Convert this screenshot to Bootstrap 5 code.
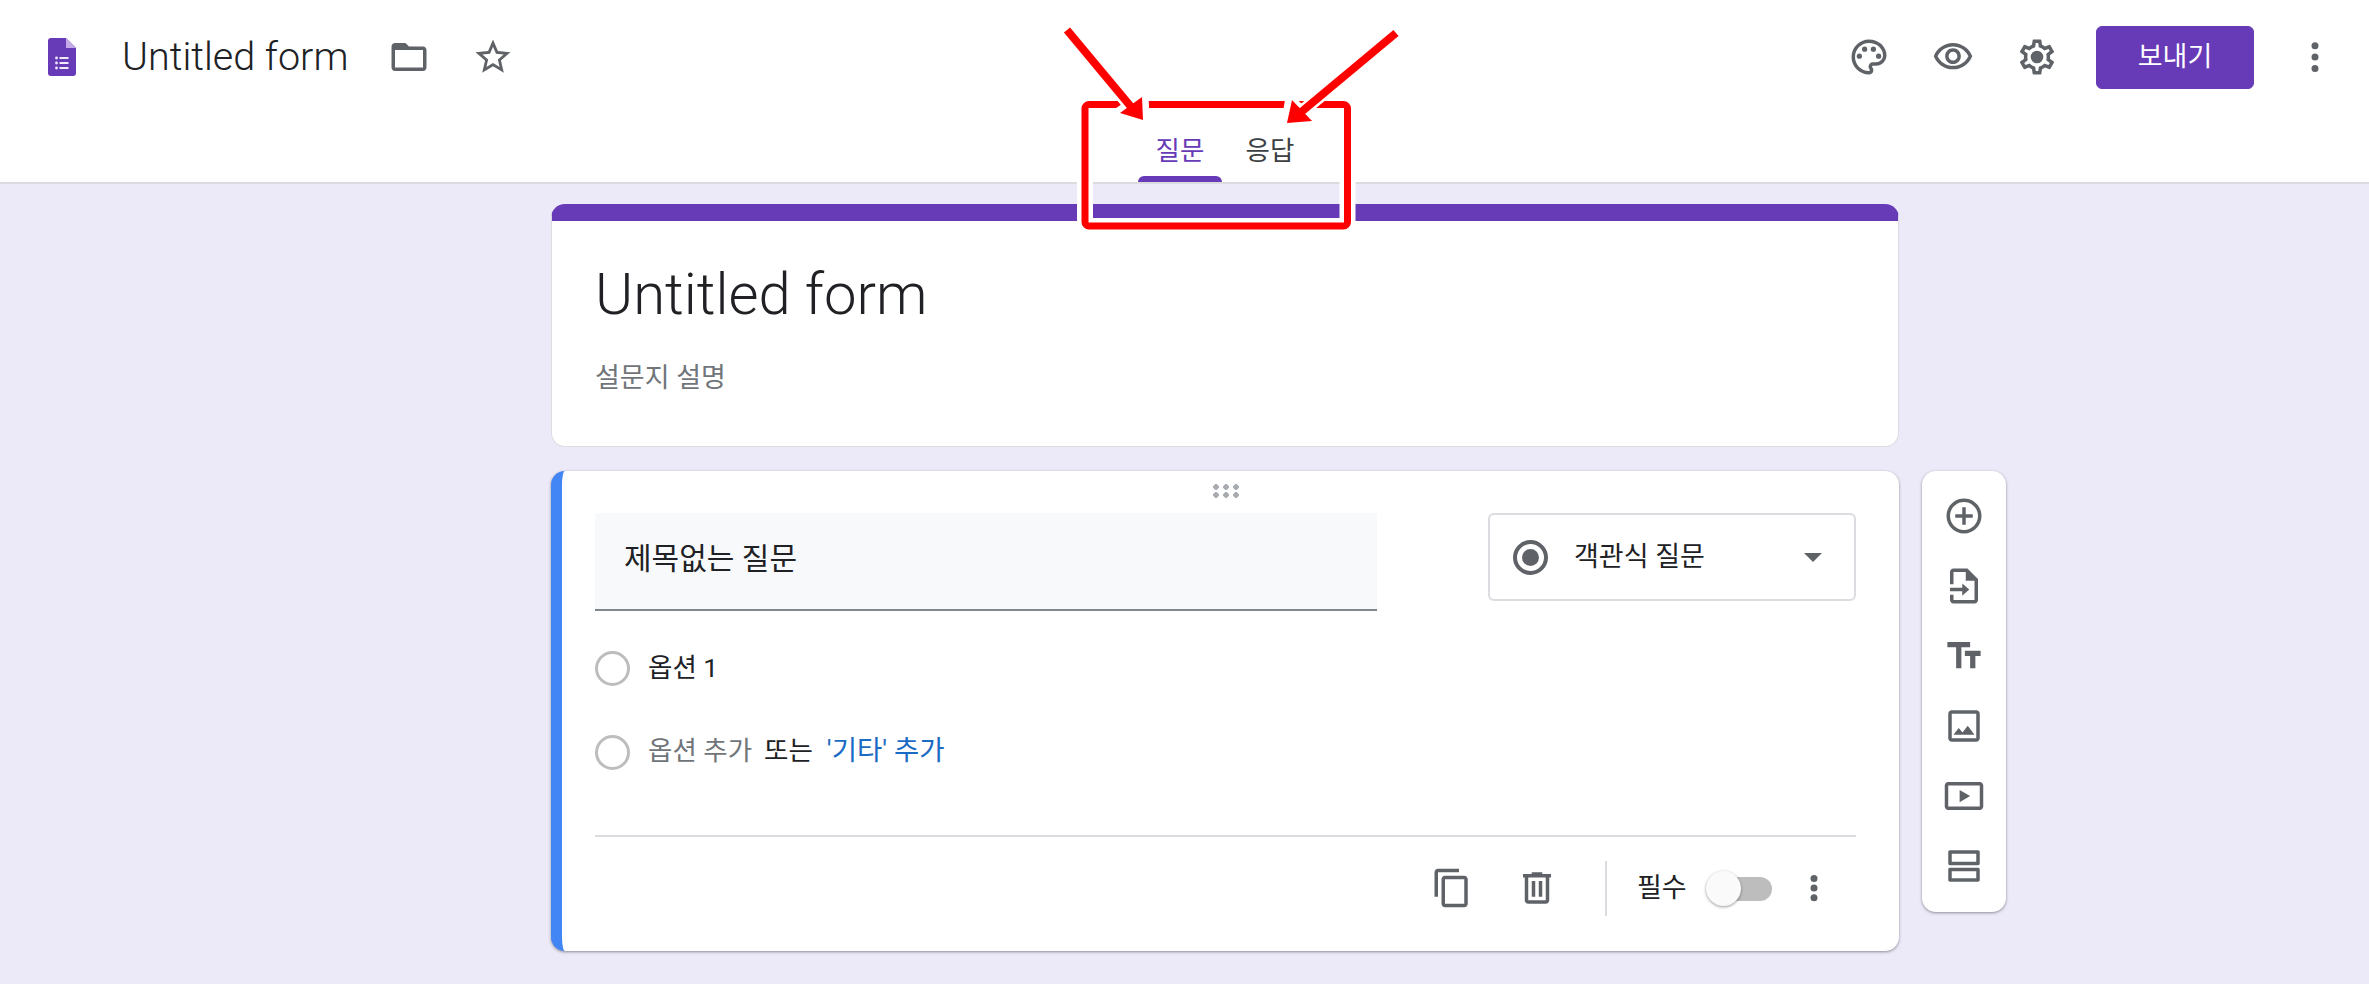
<!DOCTYPE html>
<html lang="ko">
<head>
  <meta charset="UTF-8" />
  <meta name="viewport" content="width=device-width, initial-scale=1" />
  <title>Untitled form</title>
  <link href="https://cdn.jsdelivr.net/npm/bootstrap@5.3.0/dist/css/bootstrap.min.css" rel="stylesheet" />
  <style>
    body {
      background-color: #ece9f8;
      font-family: Roboto, "Noto Sans CJK KR", sans-serif;
      font-size: 27px;
      color: #202124;
      position: relative;
      height: 984px;
      overflow: hidden;
    }
    .ic { width: 42px; height: 42px; fill: #5f6368; flex: none; display: block; }
    .top-head { height: 184px; background: #fff; border-bottom: 2px solid #dadce0; }
    .top-row { height: 114px; padding-left: 48px; padding-right: 33px; }
    .form-logo { width: 28px; height: 38px; flex: none; margin-right: 46px; display: block; }
    .doc-name { font-size: 39.5px; font-weight: 300; line-height: 1; width: 266px; }
    .gap-fold { margin-right: 42px; }
    .send-btn {
      width: 158px; height: 63px; margin: 0 40px 0 38px; font-size: 27px; padding: 0;
      background: #673ab7; border-color: #673ab7; color: #fff; border-radius: 6px;
    }
    .tab-row { padding-left: 1138px; gap: 6px; height: 68px; }
    .tab-row .nav-link {
      width: 84px; height: 68px; padding: 18px 0 0; text-align: center; color: #3c4043;
      font-size: 26.5px; line-height: 38px; position: relative;
    }
    .tab-row .nav-link.active { color: #673ab7; }
    .tab-row .nav-link.active::after {
      content: ""; position: absolute; left: 0; right: 0; bottom: 0; height: 6px;
      background: #673ab7; border-radius: 6px 6px 0 0;
    }
    .work-area { padding: 20px 0 0 551px; gap: 23px; }
    .form-col { width: 1348px; gap: 24px; }
    .head-card {
      height: 243px; border: 1px solid #dadce0; border-top: 17px solid #673ab7;
      border-radius: 14px; padding: 39px 43px 0; background: #fff;
    }
    .big-title { font-size: 58px; font-weight: 300; line-height: 68px; color: #202124; }
    .desc-txt { color: #70757a; line-height: 34px; margin-top: 33px; }
    .q-card {
      height: 480px; border: 0; border-left: 11px solid #4285f4; border-radius: 14px;
      background: #fff; padding: 42px 43px 0 33px; box-shadow: 0 1px 3px rgba(60,64,67,.55);
      position: relative;
    }
    .drag-dots {
      position: absolute; left: 649px; top: 12px; width: 28px; height: 15px;
      background-image: radial-gradient(circle, #a8abb0 2.6px, transparent 3px);
      background-size: 10px 8px;
    }
    .q-title {
      width: 782px; height: 98px; background: #f8f9fa; border-bottom: 2px solid #80868b;
      padding-left: 29px; font-size: 30px; line-height: 92px; color: #202124;
    }
    .type-box {
      width: 368px; height: 88px; border: 2px solid #dadce0; border-radius: 6px; margin-left: 111px;
      padding: 0 32px 0 23px; line-height: 80px;
    }
    .type-dot {
      width: 35px; height: 35px; border: 4px solid #5f6368; border-radius: 50%; padding: 5px; margin-right: 26px; flex: none;
    }
    .type-dot::before { content: ""; display: block; width: 17px; height: 17px; background: #5f6368; border-radius: 50%; }
    .caret-down {
      width: 0; height: 0; border: 9px solid transparent; border-top: 9px solid #5f6368; border-bottom: 0;
    }
    .opt-row { height: 36px; font-size: 26.5px; }
    .opt-ring { width: 35px; height: 35px; border: 3.5px solid #bdbdbd; border-radius: 50%; margin-right: 18px; flex: none; }
    .opt-one { margin-top: 39px; margin-bottom: 48px; }
    .opt-add span, .opt-add a { padding-bottom: 3px; }
    .muted-opt { color: #70757a; margin-right: 12px; }
    .etc-link { text-decoration: none; margin-left: 14px; color: #1a6bc4; font-size: 27.5px; }
    .q-line { border-top: 2px solid #dadce0; margin-top: 65px; }
    .q-foot { height: 102px; position: relative; }
    .copy-ic { margin-left: 836px; }
    .trash-ic { margin-left: 43px; }
    .foot-sep { width: 2px; height: 55px; background: #dadce0; margin-left: 47px; margin-right: 30px; }
    .req-txt { line-height: 1; width: 50px; margin-right: 19px; white-space: nowrap; }
    .tog { width: 66px; height: 35px; position: relative; flex: none; }
    .tog::before { content: ""; position: absolute; left: 20px; right: 0; top: 6px; height: 24px; background: #bdbdbd; border-radius: 12px; }
    .tog::after {
      content: ""; position: absolute; left: 0; top: 0; width: 35px; height: 35px; background: #fafafa;
      border-radius: 50%; box-shadow: 0 1px 3px rgba(0,0,0,.4);
    }
    .foot-dots { margin-left: 21px; }
    .side-tools {
      width: 84px; height: 441px; background: #fff; border-radius: 14px; margin-top: 267px;
      box-shadow: 0 1px 3px rgba(60,64,67,.55); padding-top: 24px; gap: 28px;
    }
    .annot { position: absolute; left: 0; top: 0; width: 2369px; height: 984px; pointer-events: none; }
  </style>
</head>
<body>

  <!-- header -->
  <header class="top-head">
    <div class="top-row d-flex align-items-center">
      <svg class="form-logo" viewBox="0 0 28 38">
        <path d="M3 0h15l10 10v25a3 3 0 0 1-3 3H3a3 3 0 0 1-3-3V3a3 3 0 0 1 3-3z" fill="#673ab7"/>
        <path d="M18 0l10 10H18z" fill="#c5a8e8"/>
        <g fill="#f1eafa">
          <circle cx="8.5" cy="20" r="1.4"/><circle cx="8.5" cy="25" r="1.4"/><circle cx="8.5" cy="30" r="1.4"/>
          <rect x="11.5" y="19" width="9" height="2"/><rect x="11.5" y="24" width="9" height="2"/><rect x="11.5" y="29" width="9" height="2"/>
        </g>
      </svg>
      <div class="doc-name">Untitled form</div>
      <svg class="ic gap-fold" viewBox="0 0 24 24"><path d="M20 6h-8l-2-2H4c-1.1 0-1.99.9-1.99 2L2 18c0 1.1.9 2 2 2h16c1.1 0 2-.9 2-2V8c0-1.1-.9-2-2-2zm0 12H4V8h16v10z"/></svg>
      <svg class="ic" viewBox="0 0 24 24"><path d="M22 9.24l-7.19-.62L12 2 9.19 8.63 2 9.24l5.46 4.73L5.82 21 12 17.27 18.18 21l-1.63-7.03L22 9.24zM12 15.4l-3.76 2.27 1-4.28-3.32-2.88 4.38-.38L12 6.1l1.71 4.04 4.38.38-3.32 2.88 1 4.28L12 15.4z"/></svg>

      <div class="ms-auto d-flex align-items-center">
        <svg class="ic gap-fold" viewBox="0 0 24 24"><path d="M12 22C6.49 22 2 17.51 2 12S6.49 2 12 2s10 4.04 10 9c0 3.31-2.69 6-6 6h-1.77c-.28 0-.5.22-.5.5 0 .12.05.23.13.33.41.47.64 1.06.64 1.67 0 1.38-1.12 2.5-2.5 2.5zm0-18c-4.41 0-8 3.59-8 8s3.59 8 8 8c.28 0 .5-.22.5-.5 0-.16-.08-.28-.14-.35-.41-.46-.63-1.05-.63-1.65 0-1.38 1.12-2.5 2.5-2.5H16c2.21 0 4-1.79 4-4 0-3.86-3.59-7-8-7z"/><circle cx="6.5" cy="11.5" r="1.5"/><circle cx="9.5" cy="7.5" r="1.5"/><circle cx="14.5" cy="7.5" r="1.5"/><circle cx="17.5" cy="11.5" r="1.5"/></svg>
        <svg class="ic gap-fold" viewBox="0 0 24 24"><path d="M12 6c3.79 0 7.17 2.13 8.82 5.5C19.17 14.87 15.79 17 12 17s-7.17-2.13-8.82-5.5C4.83 8.13 8.21 6 12 6m0-2C7 4 2.73 7.11 1 11.5 2.73 15.89 7 19 12 19s9.27-3.11 11-7.5C21.27 7.11 17 4 12 4zm0 5c1.38 0 2.5 1.12 2.5 2.5S13.38 14 12 14s-2.5-1.12-2.5-2.5S10.62 9 12 9m0-2c-2.48 0-4.5 2.02-4.5 4.5S9.52 16 12 16s4.5-2.02 4.5-4.5S14.48 7 12 7z"/></svg>
        <svg class="ic" viewBox="0 0 24 24"><path d="M19.43 12.98c.04-.32.07-.64.07-.98 0-.34-.03-.66-.07-.98l2.11-1.65c.19-.15.24-.42.12-.64l-2-3.46c-.09-.16-.26-.25-.44-.25-.06 0-.12.01-.17.03l-2.49 1c-.52-.4-1.08-.73-1.69-.98l-.38-2.65C14.46 2.18 14.25 2 14 2h-4c-.25 0-.46.18-.49.42l-.38 2.65c-.61.25-1.17.59-1.69.98l-2.49-1c-.06-.02-.12-.03-.18-.03-.17 0-.34.09-.43.25l-2 3.46c-.13.22-.07.49.12.64l2.11 1.65c-.04.32-.07.65-.07.98 0 .33.03.66.07.98l-2.11 1.65c-.19.15-.24.42-.12.64l2 3.46c.09.16.26.25.44.25.06 0 .12-.01.17-.03l2.49-1c.52.4 1.08.73 1.69.98l.38 2.65c.03.24.24.42.49.42h4c.25 0 .46-.18.49-.42l.38-2.65c.61-.25 1.17-.59 1.69-.98l2.49 1c.06.02.12.03.18.03.17 0 .34-.09.43-.25l2-3.46c.12-.22.07-.49-.12-.64l-2.11-1.65zm-1.98-1.71c.04.31.05.52.05.73 0 .21-.02.43-.05.73l-.14 1.13.89.7 1.08.84-.7 1.21-1.27-.51-1.04-.42-.9.68c-.43.32-.84.56-1.25.73l-1.06.43-.16 1.13-.2 1.35h-1.4l-.19-1.35-.16-1.13-1.06-.43c-.43-.18-.83-.41-1.23-.71l-.91-.7-1.06.43-1.27.51-.7-1.21 1.08-.84.89-.7-.14-1.13c-.03-.31-.05-.54-.05-.74s.02-.43.05-.73l.14-1.13-.89-.7-1.08-.84.7-1.21 1.27.51 1.04.42.9-.68c.43-.32.84-.56 1.25-.73l1.06-.43.16-1.13.2-1.35h1.39l.19 1.35.16 1.13 1.06.43c.43.18.83.41 1.23.71l.91.7 1.06-.43 1.27-.51.7 1.21-1.07.85-.89.7.14 1.13z"/><circle cx="12" cy="12" r="3.6"/></svg>
        <button class="btn send-btn">보내기</button>
        <svg class="ic" viewBox="0 0 24 24"><circle cx="12" cy="5.5" r="2"/><circle cx="12" cy="12" r="2"/><circle cx="12" cy="18.5" r="2"/></svg>
      </div>
    </div>
    <ul class="nav tab-row">
      <li class="nav-item"><a class="nav-link active" href="#">질문</a></li>
      <li class="nav-item"><a class="nav-link" href="#">응답</a></li>
    </ul>
  </header>

  <main class="work-area d-flex align-items-start">
    <div class="form-col d-flex flex-column">
      <!-- form title -->
      <div class="card head-card">
        <div class="big-title">Untitled form</div>
        <div class="desc-txt">설문지 설명</div>
      </div>

      <!-- question -->
      <div class="card q-card">
        <div class="drag-dots"></div>
        <div class="d-flex align-items-start">
          <div class="q-title">제목없는 질문</div>
          <div class="type-box d-flex align-items-center">
            <div class="type-dot"></div>
            <span>객관식 질문</span>
            <div class="caret-down ms-auto"></div>
          </div>
        </div>
        <div class="opt-row opt-one d-flex align-items-center">
          <div class="opt-ring"></div>
          <span>옵션 1</span>
        </div>
        <div class="opt-row opt-add d-flex align-items-center">
          <div class="opt-ring"></div>
          <span class="muted-opt">옵션 추가</span><span>또는</span>
          <a class="etc-link" href="#">'기타' 추가</a>
        </div>
        <div class="q-line"></div>
        <div class="q-foot d-flex align-items-center">
          <svg class="ic copy-ic" viewBox="0 0 24 24"><path d="M16 1H4c-1.1 0-2 .9-2 2v14h2V3h12V1zm3 4H8c-1.1 0-2 .9-2 2v14c0 1.1.9 2 2 2h11c1.1 0 2-.9 2-2V7c0-1.1-.9-2-2-2zm0 16H8V7h11v14z"/></svg>
          <svg class="ic trash-ic" viewBox="0 0 24 24"><path d="M15 4V3H9v1H4v2h1v13c0 1.1.9 2 2 2h10c1.1 0 2-.9 2-2V6h1V4h-5zm2 15H7V6h10v13zM9 8h2v9H9zm4 0h2v9h-2z"/></svg>
          <div class="foot-sep"></div>
          <div class="req-txt">필수</div>
          <div class="tog"></div>
          <svg class="ic foot-dots" viewBox="0 0 24 24"><circle cx="12" cy="6.5" r="2"/><circle cx="12" cy="12" r="2"/><circle cx="12" cy="17.5" r="2"/></svg>
        </div>
      </div>
    </div>

    <!-- side toolbar -->
    <div class="side-tools d-flex flex-column align-items-center">
      <svg class="ic" viewBox="0 0 24 24"><path d="M13 7h-2v4H7v2h4v4h2v-4h4v-2h-4V7zm-1-5C6.48 2 2 6.48 2 12s4.48 10 10 10 10-4.48 10-10S17.52 2 12 2zm0 18c-4.41 0-8-3.59-8-8s3.59-8 8-8 8 3.59 8 8-3.59 8-8 8z"/></svg>
      <svg class="ic" viewBox="0 0 24 24"><path d="M6 2h8l6 6v12c0 1.1-.9 2-2 2H6c-1.1 0-2-.9-2-2v-3h2v3h12V9h-5V4H6v7H4V4c0-1.1.9-2 2-2zM4 13h7v-2.5l4 3.5-4 3.5V15H4v-2z"/></svg>
      <svg class="ic" viewBox="0 0 24 24"><path d="M2.5 4v3h5v12h3V7h5V4h-13zm19 5h-9v3h3v7h3v-7h3V9z"/></svg>
      <svg class="ic" viewBox="0 0 24 24"><path d="M19 5v14H5V5h14m0-2H5c-1.1 0-2 .9-2 2v14c0 1.1.9 2 2 2h14c1.1 0 2-.9 2-2V5c0-1.1-.9-2-2-2zm-4.86 8.86l-3 3.87L9 13.14 6 17h12l-3.86-5.14z"/></svg>
      <svg class="ic" viewBox="0 0 24 24"><path d="M21 4H3c-1.1 0-2 .9-2 2v12c0 1.1.9 2 2 2h18c1.1 0 2-.9 2-2V6c0-1.1-.9-2-2-2zm0 14H3V6h18v12zM9.5 8.5v7l6-3.5z"/></svg>
      <svg class="ic" viewBox="0 0 24 24"><path d="M4 3h16c.6 0 1 .4 1 1v6.5c0 .6-.4 1-1 1H4c-.6 0-1-.4-1-1V4c0-.6.4-1 1-1zm1 2v4.5h14V5H5zM4 13h16c.6 0 1 .4 1 1v6c0 .6-.4 1-1 1H4c-.6 0-1-.4-1-1v-6c0-.6.4-1 1-1zm1 2v4h14v-4H5z"/></svg>
    </div>
  </main>

  <!-- red annotation drawn over the screenshot -->
  <svg class="annot" viewBox="0 0 2369 984">
    <rect x="1085" y="104.5" width="262.5" height="121.5" rx="4" fill="none" stroke="#fff" stroke-width="16"/>
    <rect x="1085" y="104.5" width="262.5" height="121.5" rx="4" fill="none" stroke="#f00" stroke-width="7"/>
    <g stroke="#fff" fill="#fff" stroke-linejoin="round" stroke-width="7">
      <path d="M1146 124L1115 113L1145 92z"/>
      <path d="M1284 127L1289 97L1317 122z"/>
    </g>
    <path d="M1067 30L1132 108" stroke="#fff" stroke-width="13"/>
    <path d="M1396 33L1300 113" stroke="#fff" stroke-width="13"/>
    <path d="M1067 30L1132 108" stroke="#f00" stroke-width="8"/>
    <path d="M1396 33L1300 113" stroke="#f00" stroke-width="8"/>
    <path d="M1143 120L1120 113L1142 97z" fill="#f00"/>
    <path d="M1287 123L1292 100L1312 121z" fill="#f00"/>
  </svg>

  <script src="https://cdn.jsdelivr.net/npm/bootstrap@5.3.0/dist/js/bootstrap.bundle.min.js"></script>
</body>
</html>
